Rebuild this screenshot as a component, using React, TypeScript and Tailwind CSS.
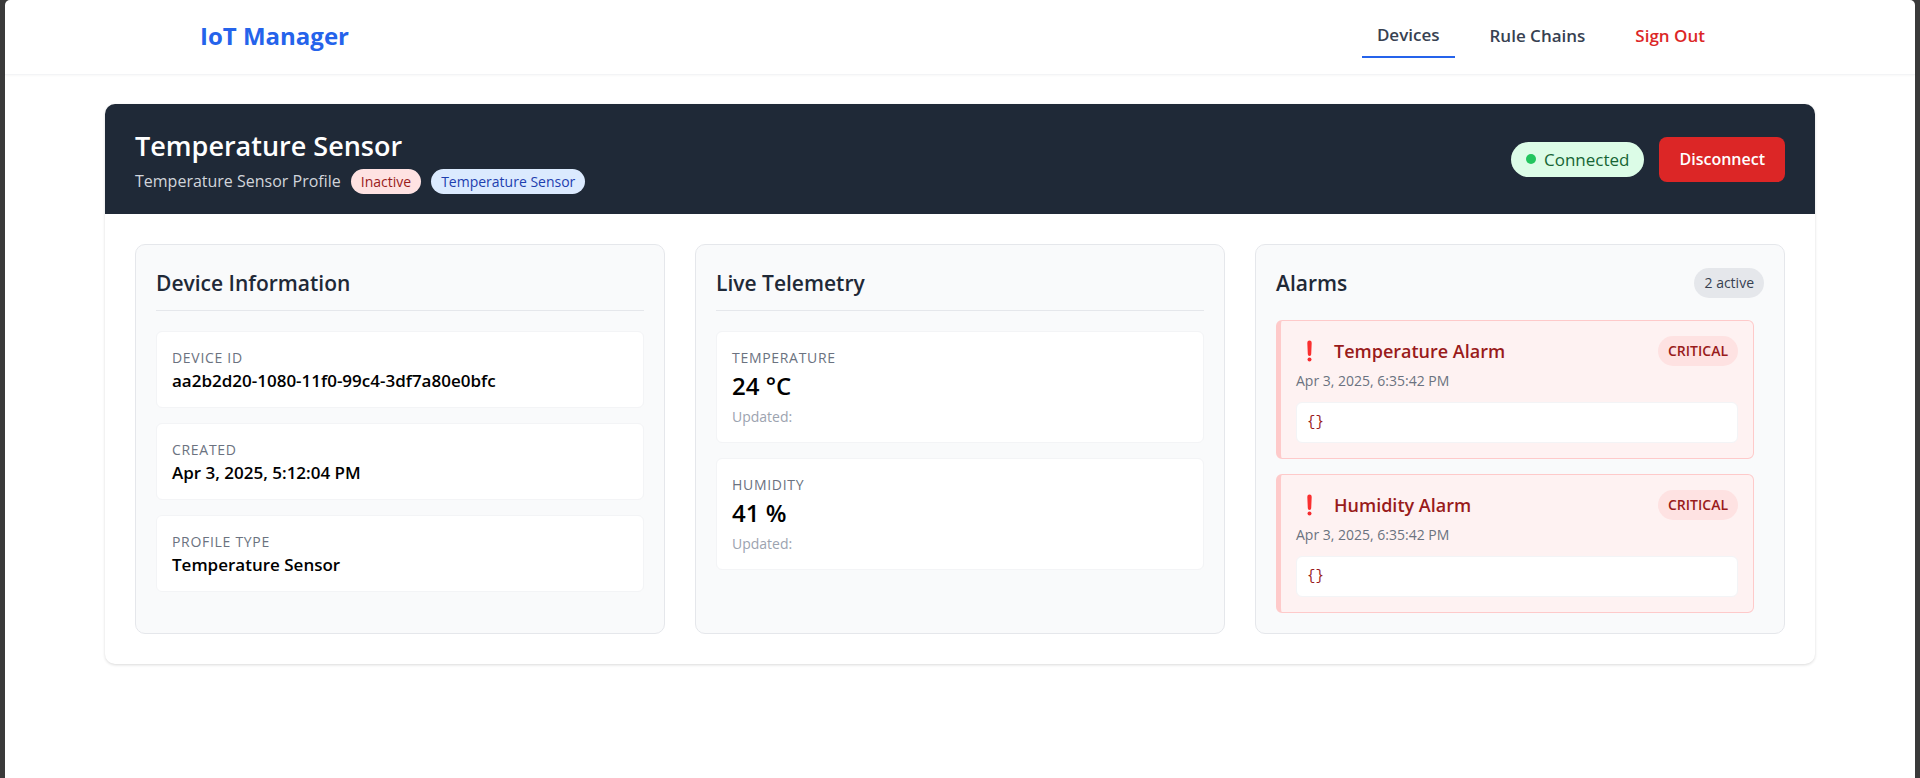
import type { ReactNode } from 'react';

const deviceInfo = [
  { label: 'Device ID', value: 'aa2b2d20-1080-11f0-99c4-3df7a80e0bfc' },
  { label: 'Created', value: 'Apr 3, 2025, 5:12:04 PM' },
  { label: 'Profile Type', value: 'Temperature Sensor' },
];

const telemetry = [
  { label: 'Temperature', value: '24 °C' },
  { label: 'Humidity', value: '41 %' },
];

const alarms = [
  { name: 'Temperature Alarm', time: 'Apr 3, 2025, 6:35:42 PM', severity: 'CRITICAL', details: '{}' },
  { name: 'Humidity Alarm', time: 'Apr 3, 2025, 6:35:42 PM', severity: 'CRITICAL', details: '{}' },
];

function ExclamationIcon() {
  return (
    <svg viewBox="0 0 28 28" className="size-7 shrink-0" aria-hidden="true">
      <path d="M11.3 5.8a2.2 2.2 0 0 1 4.4 0l-.5 11.4a1.7 1.7 0 0 1-3.4 0z" fill="#fa2f2f" />
      <circle cx="13.5" cy="22.4" r="2" fill="#f52b2f" />
    </svg>
  );
}

function Panel({ children }: { children: ReactNode }) {
  return <section className="min-w-0 rounded-[10px] border border-[#e5e7eb] bg-[#f9fafb] p-5">{children}</section>;
}

function PanelTitle({ children }: { children: ReactNode }) {
  return (
    <h2 className="mb-5 border-b border-[#e5e7eb] pb-[9px] text-[21px] leading-9 font-semibold text-[#1f2937]">
      {children}
    </h2>
  );
}

export default function App() {
  return (
    <div className="bg-[#3a3a3a] px-[5px] font-['Open_Sans','Noto_Sans',sans-serif] text-black">
      <div className="min-h-screen rounded-t-[5px] bg-white">
        <header className="border-b border-[#f3f4f6] shadow-[0_1px_2px_rgba(0,0,0,0.03)]">
          <div className="mx-auto flex h-[74px] max-w-[1520px] items-center justify-between pb-0.5">
            <a href="#home" className="text-2xl font-bold text-[#2563eb]">IoT Manager</a>
            <nav className="flex items-center gap-5 text-[17px] leading-6 font-semibold text-[#374151]">
              <a href="#devices" className="border-b-2 border-[#2563eb] px-[15px] pt-2 pb-[9px]">Devices</a>
              <a href="#rules" className="px-[15px] py-2">Rule Chains</a>
              <button type="button" className="px-[15px] py-2 text-[#dc2626]">Sign Out</button>
            </nav>
          </div>
        </header>

        <main className="px-[100px] pt-[29px] pb-10">
          <div className="overflow-hidden rounded-[10px] bg-white shadow-[0_1px_3px_rgba(0,0,0,0.15)]">
            <div className="flex items-center justify-between bg-[#1f2937] px-[30px] py-5">
              <div>
                <h1 className="mb-0.5 text-[27px] leading-[43px] font-semibold text-white">Temperature Sensor</h1>
                <div className="flex items-center gap-2.5">
                  <span className="text-base leading-[25px] text-[#d1d5db]">Temperature Sensor Profile</span>
                  <span className="rounded-full bg-[#fee2e2] px-2.5 text-sm leading-[25px] text-[#991b1b]">Inactive</span>
                  <span className="rounded-full bg-[#dbeafe] px-2.5 text-sm leading-[25px] text-[#1e40af]">Temperature Sensor</span>
                </div>
              </div>
              <div className="flex items-center gap-[15px]">
                <span className="flex items-center gap-2 rounded-full bg-[#dcfce7] px-[15px] text-[17px] leading-[35px] text-[#166534]">
                  <span className="size-2.5 rounded-full bg-[#22c55e]" />
                  Connected
                </span>
                <button type="button" className="rounded-lg bg-[#dc2626] px-5 text-base leading-[45px] font-semibold text-white">
                  Disconnect
                </button>
              </div>
            </div>

            <div className="grid grid-cols-3 gap-[30px] p-[30px]">
              <Panel>
                <PanelTitle>Device Information</PanelTitle>
                <dl className="flex flex-col gap-[15px]">
                  {deviceInfo.map((item) => (
                    <div key={item.label} className="rounded-md border border-[#f3f4f6] bg-white p-[15px]">
                      <dt className="text-sm leading-[22px] tracking-wider text-[#6b7280] uppercase">{item.label}</dt>
                      <dd className="text-[17px] leading-[23px] font-semibold">{item.value}</dd>
                    </div>
                  ))}
                </dl>
              </Panel>

              <Panel>
                <PanelTitle>Live Telemetry</PanelTitle>
                <div className="flex flex-col gap-[15px]">
                  {telemetry.map((item) => (
                    <div key={item.label} className="rounded-md border border-[#f3f4f6] bg-white p-[15px]">
                      <div className="text-sm leading-[22px] tracking-wider text-[#6b7280] uppercase">{item.label}</div>
                      <div className="text-2xl leading-[34px] font-semibold">{item.value}</div>
                      <div className="mt-1 text-sm leading-5 text-[#9ca3af]">Updated:</div>
                    </div>
                  ))}
                </div>
              </Panel>

              <Panel>
                <div className="mb-[19px] flex items-center justify-between">
                  <h2 className="text-[21px] leading-9 font-semibold text-[#1f2937]">Alarms</h2>
                  <span className="rounded-full bg-[#e5e7eb] px-2.5 text-sm leading-[30px] text-[#374151]">2 active</span>
                </div>
                <ul className="flex flex-col gap-[15px] pr-2.5">
                  {alarms.map((alarm) => (
                    <li key={alarm.name} className="rounded-md border border-l-[5px] border-[#fecaca] bg-[#fef2f2] p-[15px]">
                      <div className="flex items-center justify-between">
                        <h3 className="flex items-center gap-2.5 text-lg leading-[30px] font-semibold text-[#991b1b]">
                          <ExclamationIcon />
                          {alarm.name}
                        </h3>
                        <span className="rounded-full bg-[#fee2e2] px-2.5 text-sm leading-[30px] font-semibold text-[#991b1b]">
                          {alarm.severity}
                        </span>
                      </div>
                      <p className="mt-1 text-sm leading-[22px] text-[#6b7280]">{alarm.time}</p>
                      <pre className="mt-2.5 rounded-md border border-[#f3f4f6] bg-white px-2.5 font-['Liberation_Mono',monospace] text-sm leading-[39px] text-[#991b1b]">
                        {alarm.details}
                      </pre>
                    </li>
                  ))}
                </ul>
              </Panel>
            </div>
          </div>
        </main>
      </div>
    </div>
  );
}
